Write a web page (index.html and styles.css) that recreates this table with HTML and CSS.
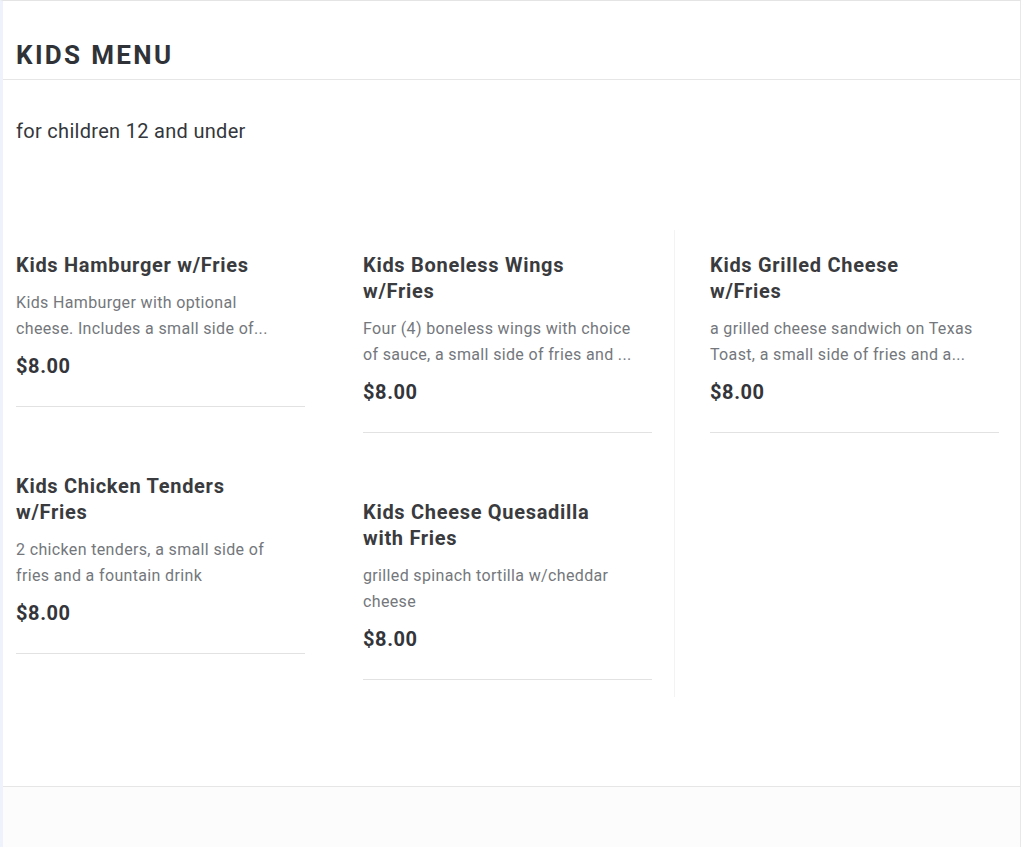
FILE: index.html
```html
<!DOCTYPE html>
<html lang="en">
<head>
<meta charset="utf-8">
<title>Kids Menu</title>
<link rel="stylesheet" href="styles.css">
</head>
<body>
<div class="page">
  <header class="section-head">
    <h1 class="section-title">KIDS MENU</h1>
  </header>
  <p class="section-note">for children 12 and under</p>
  <div class="menu-grid">
    <div class="menu-col">
      <div class="item">
        <h2 class="item-name">Kids Hamburger w/Fries</h2>
        <p class="item-desc">Kids Hamburger with optional cheese. Includes a small side of...</p>
        <div class="item-price">$8.00</div>
      </div>
      <div class="item">
        <h2 class="item-name">Kids Chicken Tenders w/Fries</h2>
        <p class="item-desc">2 chicken tenders, a small side of fries and a fountain drink</p>
        <div class="item-price">$8.00</div>
      </div>
    </div>
    <div class="menu-col menu-col--mid">
      <div class="item">
        <h2 class="item-name">Kids Boneless Wings w/Fries</h2>
        <p class="item-desc">Four (4) boneless wings with choice of sauce, a small side of fries and ...</p>
        <div class="item-price">$8.00</div>
      </div>
      <div class="item">
        <h2 class="item-name">Kids Cheese Quesadilla with Fries</h2>
        <p class="item-desc">grilled spinach tortilla w/cheddar cheese</p>
        <div class="item-price">$8.00</div>
      </div>
    </div>
    <div class="menu-col">
      <div class="item">
        <h2 class="item-name">Kids Grilled Cheese w/Fries</h2>
        <p class="item-desc">a grilled cheese sandwich on Texas Toast, a small side of fries and a...</p>
        <div class="item-price">$8.00</div>
      </div>
    </div>
  </div>
  <div class="page-foot"></div>
</div>
</body>
</html>
```

FILE: styles.css
```css
html, body {
  margin: 0;
  padding: 0;
  background: #ffffff;
}
body {
  font-family: Roboto, "Liberation Sans", Arial, sans-serif;
  color: #333;
}
.page {
  width: 1021px;
  min-height: 847px;
  border-top: 1px solid #e4e4e4;
  border-right: 1px solid #e8e8e8;
  border-left: 3px solid #eef2fb;
  box-sizing: border-box;
  display: flex;
  flex-direction: column;
}
.section-head {
  height: 79px;
  border-bottom: 1px solid #e6e6e6;
  display: flex;
  align-items: flex-end;
  padding: 0 0 0 13px;
  box-sizing: border-box;
}
.section-title {
  margin: 0 0 9px;
  font-size: 26px;
  line-height: 30px;
  font-weight: 700;
  letter-spacing: 2.35px;
  color: #2f3237;
}
.section-note {
  margin: 38px 0 0 13px;
  font-size: 20px;
  line-height: 26px;
  letter-spacing: 0.3px;
  color: #34373c;
}
.menu-grid {
  margin: 108px 0 0 13px;
  width: 983px;
  display: grid;
  grid-template-columns: 289px 289px 289px;
  column-gap: 58px;
  align-items: start;
}
.menu-col {
  display: flex;
  flex-direction: column;
  gap: 66px;
  padding-bottom: 17px;
}
.menu-col--mid {
  position: relative;
}
.menu-col--mid::after {
  content: "";
  position: absolute;
  top: -22px;
  bottom: 0;
  right: -23px;
  border-right: 1px solid #f3f3f3;
}
.item {
  border-bottom: 1px solid #e2e2e2;
  padding-bottom: 27px;
}
.item-name {
  margin: 0;
  max-width: 256px;
  font-size: 20px;
  line-height: 26px;
  font-weight: 700;
  letter-spacing: 0.7px;
  color: #3a3b3e;
}
.item-desc {
  margin: 12px 0 0;
  font-size: 16px;
  line-height: 26px;
  letter-spacing: 0.35px;
  color: #74777c;
  padding-right: 18px;
}
.item-price {
  margin-top: 11px;
  font-size: 20px;
  line-height: 26px;
  font-weight: 700;
  letter-spacing: 0.6px;
  color: #33353a;
}
.page-foot {
  margin-top: auto;
  height: 60px;
  border-top: 1px solid #e6e6e6;
  background: #fcfcfc;
}
```
